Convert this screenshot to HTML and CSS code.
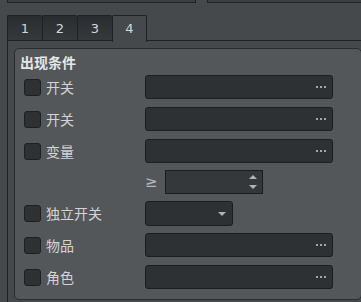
FILE: index.html
```html
<!DOCTYPE html>
<html lang="zh">
<head>
  <meta charset="UTF-8" />
  <title>出现条件</title>
  <link rel="stylesheet" href="styles.css">
</head>
<body>
  <div class="top">
    <div class="stub stub-left"></div>
    <div class="stub stub-right"></div>
  </div>

  <div class="tabs">
    <div class="tab">1</div>
    <div class="tab">2</div>
    <div class="tab">3</div>
    <div class="tab active">4</div>
  </div>

  <div class="pane">
    <div class="group">
      <div class="group-title">出现条件</div>

      <div class="row">
        <label class="check"><span class="box"></span>开关</label>
        <div class="field"><span class="dots"><i></i><i></i><i></i></span></div>
      </div>

      <div class="row">
        <label class="check"><span class="box"></span>开关</label>
        <div class="field"><span class="dots"><i></i><i></i><i></i></span></div>
      </div>

      <div class="row">
        <label class="check"><span class="box"></span>变量</label>
        <div class="field"><span class="dots"><i></i><i></i><i></i></span></div>
      </div>

      <div class="row spin-row">
        <span class="ge">≥</span>
        <div class="spin">
          <span class="arrows"><b class="up"></b><b class="down"></b></span>
        </div>
      </div>

      <div class="row">
        <label class="check"><span class="box"></span>独立开关</label>
        <div class="combo"><b class="down"></b></div>
      </div>

      <div class="row">
        <label class="check"><span class="box"></span>物品</label>
        <div class="field"><span class="dots"><i></i><i></i><i></i></span></div>
      </div>

      <div class="row">
        <label class="check"><span class="box"></span>角色</label>
        <div class="field"><span class="dots"><i></i><i></i><i></i></span></div>
      </div>
    </div>

    <div class="group group-side">
      <div class="group-title">出现</div>
    </div>
  </div>
</body>
</html>
```

FILE: styles.css
```css
html {
  overflow: hidden;
}
body {
  margin: 0;
  width: 361px;
  height: 302px;
  overflow: hidden;
  background: #46494b;
  color: #d8d8d8;
  font-family: "Noto Sans CJK SC", "DejaVu Sans", sans-serif;
  font-size: 14px;
}
.top {
  display: flex;
  gap: 11px;
  padding-left: 7px;
  height: 3px;
}
.stub {
  height: 2px;
  background: #3c3f41;
  border: 1px solid #1f2123;
  border-top: none;
}
.stub-left {
  width: 187px;
}
.stub-right {
  flex: 1;
  margin-right: -4px;
}
.tabs {
  display: flex;
  margin-top: 12px;
  padding-left: 7px;
  height: 25px;
  position: relative;
  z-index: 1;
}
.tab {
  width: 34px;
  height: 24px;
  border: 1px solid #1e2022;
  border-right: none;
  border-radius: 2px 2px 0 0;
  background: linear-gradient(#2a2d2f, #36393b);
  color: #d6d6d6;
  font-family: "DejaVu Sans", sans-serif;
  font-size: 13px;
  line-height: 25px;
  text-align: center;
}
.tab.active {
  width: 33px;
  height: 26px;
  border-right: 1px solid #1e2022;
  border-bottom: none;
  background: #46494b;
}
.pane {
  display: flex;
  gap: 10px;
  margin-left: 7px;
  height: 254px;
  padding: 7px 0 0 6px;
  border-top: 1px solid #1e2022;
  border-left: 1px solid #1e2022;
  overflow: hidden;
}
.group {
  flex: none;
  width: 328px;
  height: 250px;
  padding: 0 9px;
  background: #54575a;
  border: 1px solid #2a2c2e;
  border-radius: 5px;
}
.group-title {
  margin-left: -4px;
  padding-top: 3px;
  line-height: 20px;
  font-weight: bold;
  color: #e6e6e6;
  margin-bottom: 3px;
  white-space: nowrap;
}
.group-side {
  width: 40px;
}
.group-side .group-title {
  color: #cdd6de;
}
.row {
  display: flex;
  align-items: center;
  height: 24px;
  margin-bottom: 8px;
}
.check {
  display: flex;
  align-items: center;
  width: 121px;
  height: 24px;
  color: #d4d4d4;
}
.box {
  width: 15px;
  height: 15px;
  margin-right: 5px;
  background: #2e3134;
  border: 1px solid #1d1f21;
  border-radius: 3px;
}
.field,
.combo {
  position: relative;
  width: 186px;
  height: 22px;
  background: #2e3134;
  border: 1px solid #1b1d1f;
  border-radius: 3px;
}
.combo {
  width: 86px;
  height: 23px;
}
.dots {
  position: absolute;
  right: 6px;
  top: 10px;
  display: flex;
  gap: 2px;
}
.dots i {
  width: 2px;
  height: 2px;
  background: #a6a6a6;
}
.spin-row {
  margin-top: -1px;
  margin-bottom: 7px;
  padding-left: 121px;
}
.ge {
  width: 20px;
  color: #b4b8bc;
  font-family: "DejaVu Sans", sans-serif;
  font-size: 15px;
  line-height: 24px;
}
.spin {
  position: relative;
  width: 96px;
  height: 22px;
  background: #35383b;
  border: 1px solid #1a1c1e;
}
.arrows {
  position: absolute;
  right: 5px;
  top: 4px;
  display: flex;
  flex-direction: column;
  gap: 6px;
}
.up,
.down {
  display: block;
  width: 0;
  height: 0;
  border-left: 4px solid transparent;
  border-right: 4px solid transparent;
}
.up {
  border-bottom: 4px solid #b2b2b2;
}
.down {
  border-top: 4px solid #b2b2b2;
}
.combo .down {
  position: absolute;
  right: 6px;
  top: 10px;
}
```
